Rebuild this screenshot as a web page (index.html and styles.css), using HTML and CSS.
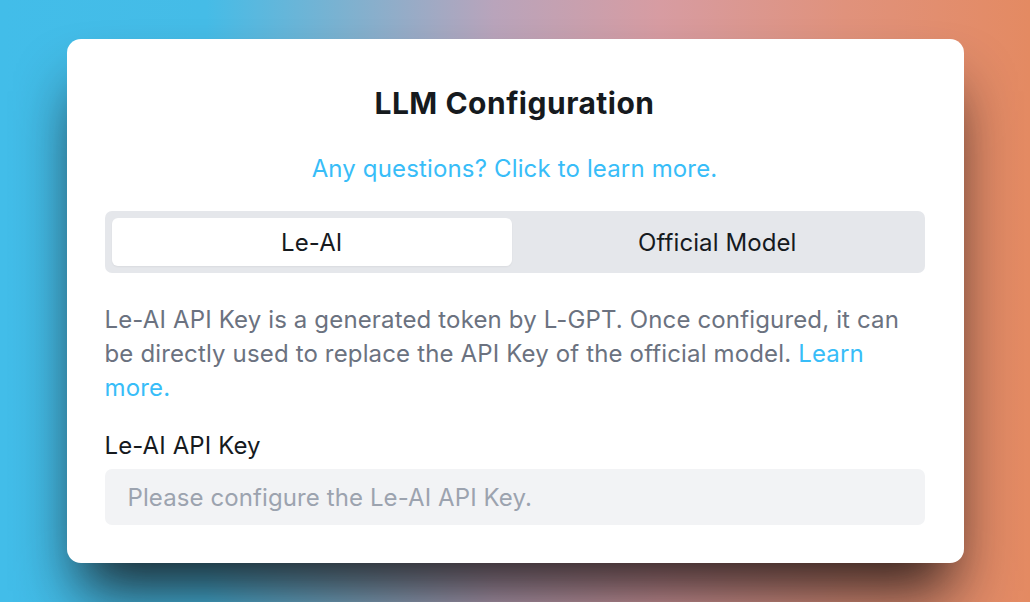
FILE: index.html
```html
<!DOCTYPE html>
<html lang="en">
<head>
<meta charset="utf-8">
<title>LLM Configuration</title>
<link rel="stylesheet" href="styles.css">
</head>
<body>
<main class="stage">
  <section class="card">
    <h1 class="title">LLM Configuration</h1>
    <a class="help-link" href="#">Any questions? Click to learn more.</a>
    <div class="tabs">
      <button class="tab tab-active">Le-AI</button>
      <button class="tab">Official Model</button>
    </div>
    <p class="desc">Le-AI API Key is a generated token by L-GPT. Once configured, it can be directly used to replace the API Key of the official model. <a class="inline-link" href="#">Learn more.</a></p>
    <label class="field-label" for="key">Le-AI API Key</label>
    <input class="field-input" id="key" type="text" placeholder="Please configure the Le-AI API Key.">
  </section>
</main>
</body>
</html>
```

FILE: styles.css
```css
* { box-sizing: border-box; }
html, body { margin: 0; padding: 0; }
body {
  width: 1030px;
  height: 602px;
  overflow: hidden;
  font-family: Inter, "Noto Sans", sans-serif;
}
.stage {
  width: 1030px;
  height: 602px;
  display: flex;
  align-items: center;
  justify-content: center;
  background: linear-gradient(90deg, #42bde9 0%, #45bce7 20%, #7fb1cf 34%, #b9a4bb 48%, #d79ca2 64%, #e0927c 82%, #e48a62 100%);
}
.card {
  width: 897px;
  height: 524px;
  background: #fff;
  border-radius: 14px;
  padding: 42px 39px 38px 38px;
  display: flex;
  flex-direction: column;
  box-shadow: 0 40px 60px -12px rgba(20, 14, 14, 0.85);
}
.title {
  margin: 0;
  text-align: center;
  font-size: 30px;
  line-height: 44px;
  font-weight: 700;
  letter-spacing: 0.5px;
  color: #161a1e;
}
.help-link {
  margin-top: 26px;
  text-align: center;
  font-size: 24px;
  line-height: 36px;
  letter-spacing: 0.15px;
  color: #38bdf8;
  text-decoration: none;
}
.tabs {
  margin-top: 24px;
  height: 62px;
  background: #e5e7eb;
  border-radius: 7px;
  padding: 7px;
  display: grid;
  grid-template-columns: 1fr 1fr;
  gap: 5px;
}
.tab {
  border: 0;
  background: transparent;
  border-radius: 6px;
  font-family: inherit;
  font-size: 24px;
  letter-spacing: 0.1px;
  color: #161a1e;
  padding: 0;
}
.tab-active {
  background: #fff;
  box-shadow: 0 1px 2px rgba(0,0,0,0.05);
}
.desc {
  margin: 30px 0 0;
  font-size: 24px;
  line-height: 34px;
  letter-spacing: 0.15px;
  color: #6b7280;
}
.inline-link {
  color: #38bdf8;
  text-decoration: none;
}
.field-label {
  margin-top: 24px;
  font-size: 24px;
  line-height: 34px;
  letter-spacing: 0.1px;
  color: #161a1e;
}
.field-input {
  margin-top: 6px;
  height: 56px;
  border: 0;
  border-radius: 7px;
  background: #f2f3f5;
  padding: 0 23px;
  font-family: inherit;
  font-size: 24px;
  letter-spacing: 0.1px;
  color: #161a1e;
  outline: none;
}
.field-input::placeholder { color: #9ca3af; }
```
